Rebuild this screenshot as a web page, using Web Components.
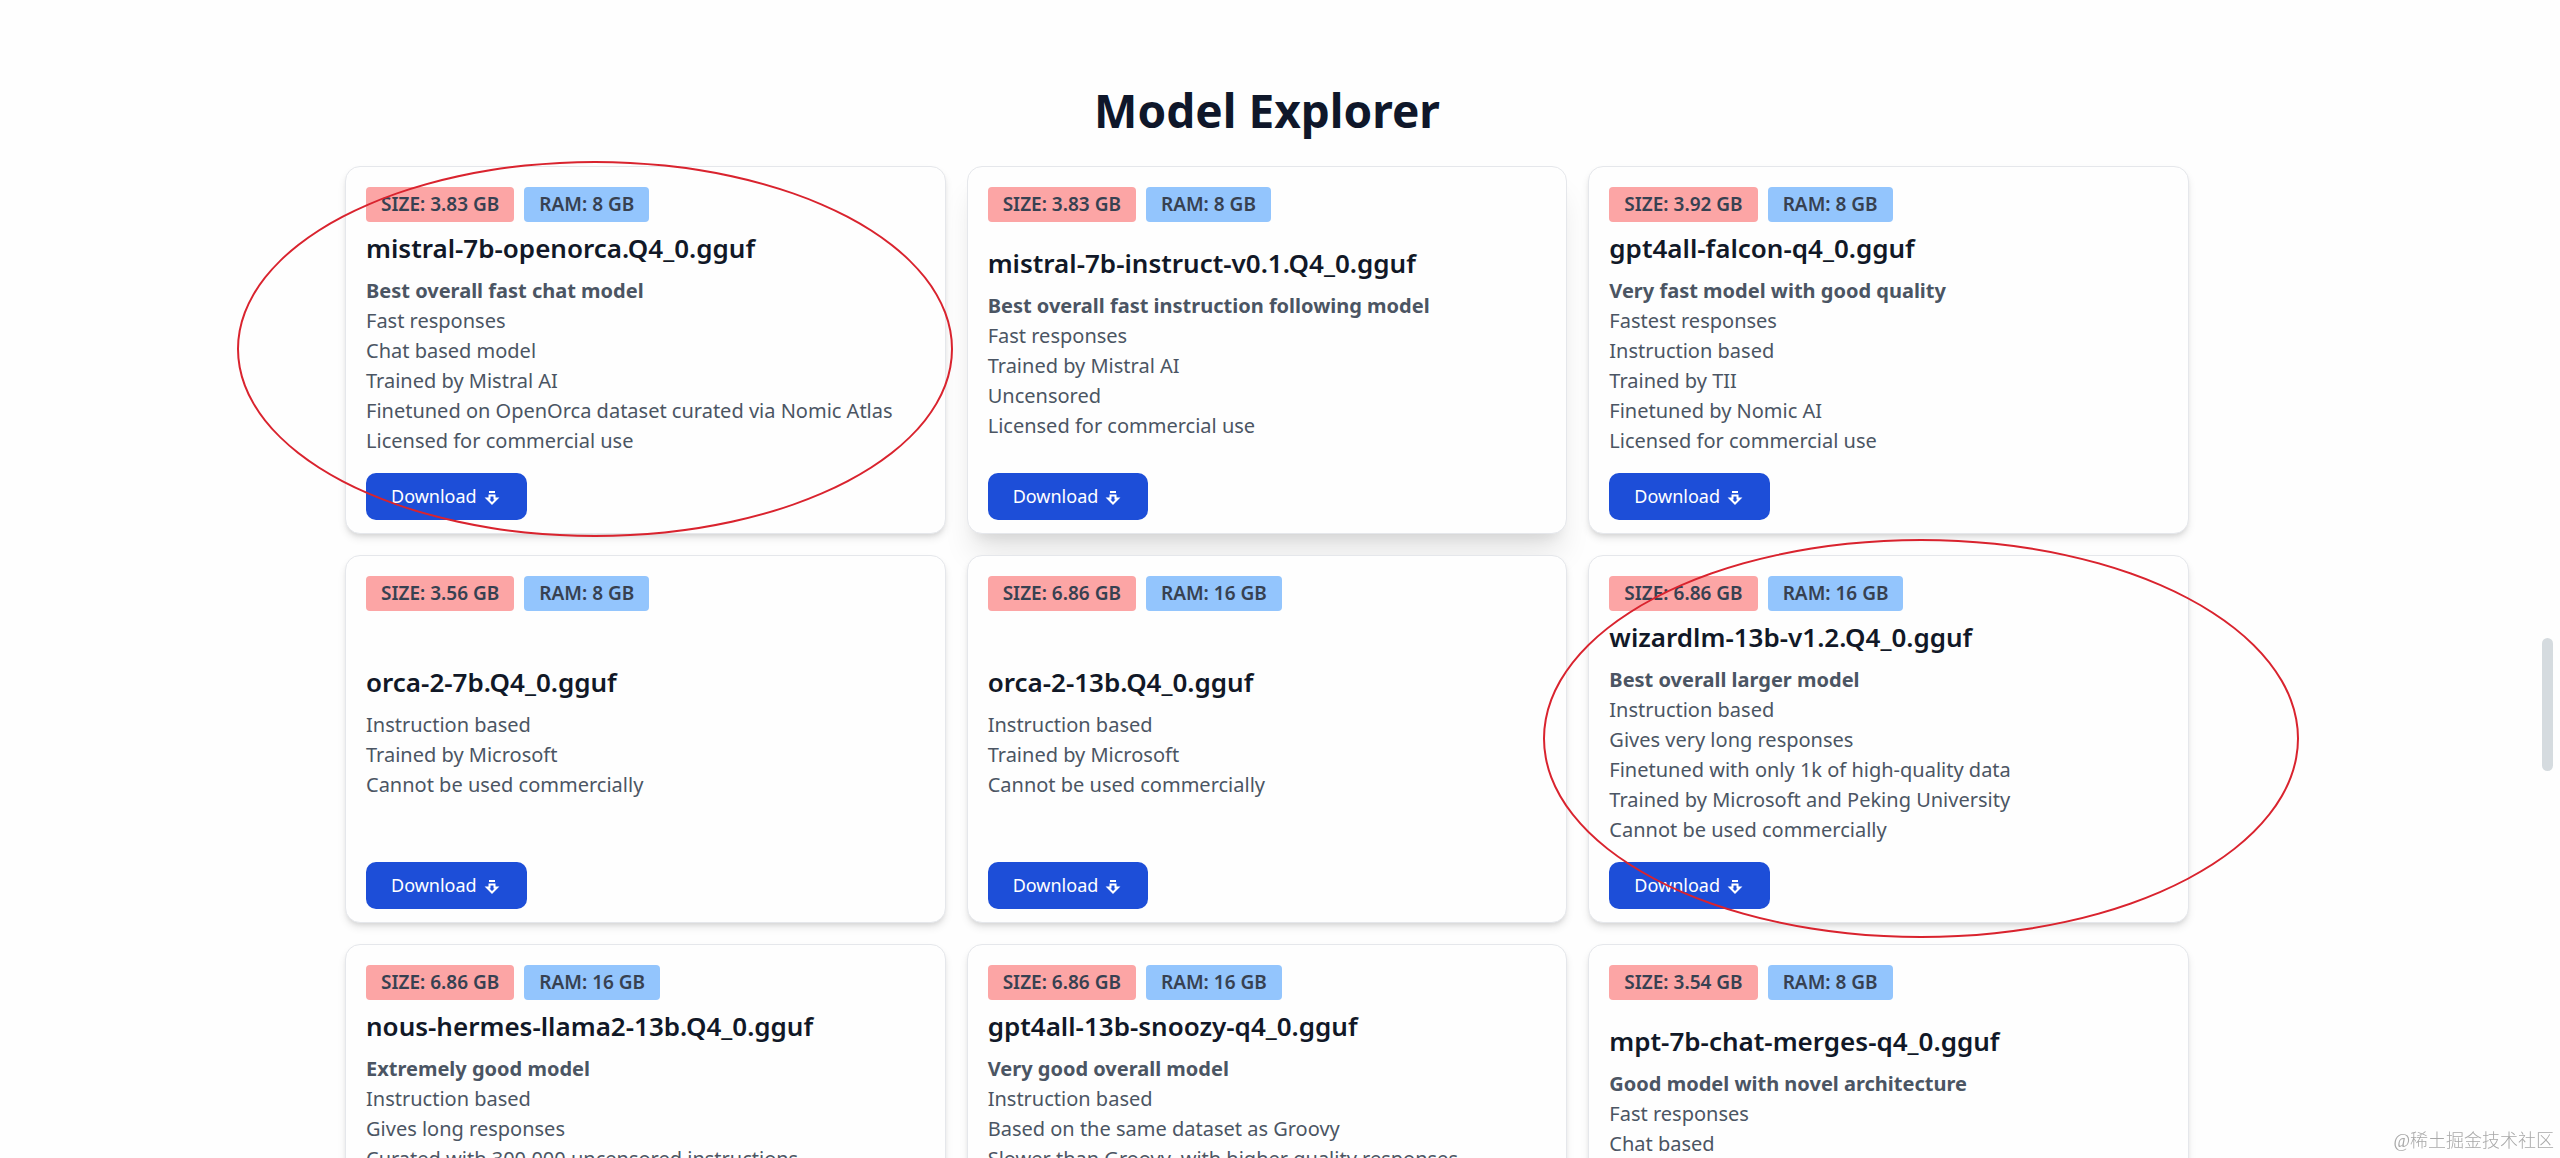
<!DOCTYPE html>
<html lang="en">
<head>
<meta charset="utf-8">
<title>Model Explorer</title>
<style>
  html, body {
    height: 100%;
    margin: 0;
  }
  body {
    overflow: hidden;
    background: #fefefe;
    font-family: "Noto Sans", "Open Sans", sans-serif;
  }
</style>
</head>
<body>
<model-explorer></model-explorer>

<script>
const models = [
  { file: 'mistral-7b-openorca.Q4_0.gguf', size: '3.83', ram: 8, title: 'Best overall fast chat model', mark: 'first',
    notes: ['Fast responses', 'Chat based model', 'Trained by Mistral AI', 'Finetuned on OpenOrca dataset curated via Nomic Atlas', 'Licensed for commercial use'] },
  { file: 'mistral-7b-instruct-v0.1.Q4_0.gguf', size: '3.83', ram: 8, title: 'Best overall fast instruction following model', raised: true,
    notes: ['Fast responses', 'Trained by Mistral AI', 'Uncensored', 'Licensed for commercial use'] },
  { file: 'gpt4all-falcon-q4_0.gguf', size: '3.92', ram: 8, title: 'Very fast model with good quality',
    notes: ['Fastest responses', 'Instruction based', 'Trained by TII', 'Finetuned by Nomic AI', 'Licensed for commercial use'] },
  { file: 'orca-2-7b.Q4_0.gguf', size: '3.56', ram: 8,
    notes: ['Instruction based', 'Trained by Microsoft', 'Cannot be used commercially'] },
  { file: 'orca-2-13b.Q4_0.gguf', size: '6.86', ram: 16,
    notes: ['Instruction based', 'Trained by Microsoft', 'Cannot be used commercially'] },
  { file: 'wizardlm-13b-v1.2.Q4_0.gguf', size: '6.86', ram: 16, title: 'Best overall larger model', mark: 'second',
    notes: ['Instruction based', 'Gives very long responses', 'Finetuned with only 1k of high-quality data', 'Trained by Microsoft and Peking University', 'Cannot be used commercially'] },
  { file: 'nous-hermes-llama2-13b.Q4_0.gguf', size: '6.86', ram: 16, title: 'Extremely good model',
    notes: ['Instruction based', 'Gives long responses', 'Curated with 300,000 uncensored instructions', 'Trained by Nous Research', 'Cannot be used commercially'] },
  { file: 'gpt4all-13b-snoozy-q4_0.gguf', size: '6.86', ram: 16, title: 'Very good overall model',
    notes: ['Instruction based', 'Based on the same dataset as Groovy', 'Slower than Groovy, with higher quality responses', 'Trained by Nomic AI', 'Cannot be used commercially'] },
  { file: 'mpt-7b-chat-merges-q4_0.gguf', size: '3.54', ram: 8, title: 'Good model with novel architecture',
    notes: ['Fast responses', 'Chat based', 'Trained by Mosaic ML', 'Cannot be used commercially'] }
];

const make = (html) => {
  const template = document.createElement('template');
  template.innerHTML = html;
  return template;
};

const tagTemplate = make(`
<style>
  :host {
    display: block;
    padding: 5px 15px;
    border-radius: 4px;
    background: #93c5fd;
    color: #374151;
    font-size: 19px;
    font-weight: 600;
    line-height: 25px;
    white-space: nowrap;
  }
  :host([kind="size"]) {
    background: #fca5a5;
  }
</style>
<slot></slot>
`);

class ModelTag extends HTMLElement {
  constructor() {
    super();
    this.attachShadow({ mode: 'open' }).appendChild(tagTemplate.content.cloneNode(true));
  }
}
customElements.define('model-tag', ModelTag);

const buttonTemplate = make(`
<style>
  :host {
    display: flex;
  }
  button {
    display: flex;
    align-items: center;
    gap: 7px;
    padding: 11px 25px;
    border: 0;
    border-radius: 10px;
    background: #1d4ed8;
    color: #fff;
    font-family: inherit;
    font-size: 18px;
    line-height: 25px;
    cursor: pointer;
  }
  svg {
    display: block;
    width: 18px;
    height: 18px;
  }
</style>
<button type="button">
  <slot></slot>
  <svg viewBox="0 0 18 18" fill="none" stroke="currentColor" stroke-width="2" aria-hidden="true">
    <path d="M5 4h6M5.500 7.500h5v3h2.500l-5 5-5-5h2.500z"/>
  </svg>
</button>
`);

class DownloadButton extends HTMLElement {
  constructor() {
    super();
    this.attachShadow({ mode: 'open' }).appendChild(buttonTemplate.content.cloneNode(true));
  }
}
customElements.define('download-button', DownloadButton);

const cardTemplate = make(`
<style>
  :host {
    display: flex;
    flex-direction: column;
    position: relative;
    box-sizing: border-box;
    padding: 20px 20px 13px;
    border: 1px solid #e5e7eb;
    border-radius: 15px;
    background: #fefefe;
    box-shadow: 0 5px 8px -1px rgba(0, 0, 0, .1), 0 3px 5px -2px rgba(0, 0, 0, .1);
  }
  :host([raised]) {
    box-shadow: 0 25px 31px -6px rgba(0, 0, 0, .1), 0 10px 13px -8px rgba(0, 0, 0, .1);
  }
  .tags {
    display: flex;
    gap: 10px;
  }
  .info {
    flex: 1;
    display: flex;
    flex-direction: column;
    justify-content: center;
    padding: 10px 0 17px;
  }
  h2 {
    margin: 0 0 12px;
    color: #111827;
    font-size: 26px;
    font-weight: 600;
    line-height: 32px;
  }
  ul {
    margin: 0;
    padding: 0;
    list-style: none;
    color: #4b5563;
    font-size: 20px;
    line-height: 30px;
  }
  .lead {
    font-weight: 700;
  }
</style>
<div class="tags"></div>
<div class="info">
  <h2></h2>
  <ul></ul>
</div>
<download-button>Download</download-button>
<slot></slot>
`);

class ModelCard extends HTMLElement {
  constructor() {
    super();
    this.attachShadow({ mode: 'open' }).appendChild(cardTemplate.content.cloneNode(true));
  }

  set model(m) {
    const root = this.shadowRoot;
    root.querySelector('.tags').innerHTML = `
      <model-tag kind="size">SIZE: ${m.size} GB</model-tag>
      <model-tag kind="ram">RAM: ${m.ram} GB</model-tag>`;
    root.querySelector('h2').textContent = m.file;
    const lead = m.title ? `<li class="lead">${m.title}</li>` : '';
    root.querySelector('ul').innerHTML = lead + m.notes.map(n => `<li>${n}</li>`).join('');
    this.toggleAttribute('raised', !!m.raised);
  }
}
customElements.define('model-card', ModelCard);

// red ellipse drawn round a card
const markTemplate = make(`
<style>
  :host {
    display: block;
    position: absolute;
    z-index: 1;
    box-sizing: border-box;
    border: 2px solid #d9232e;
    border-radius: 50%;
    pointer-events: none;
  }
  :host([place="first"]) {
    inset: -6px -8px -4px -109px;
  }
  :host([place="second"]) {
    inset: -17px -111px -16px -46px;
  }
</style>
`);

class RingMark extends HTMLElement {
  constructor() {
    super();
    this.attachShadow({ mode: 'open' }).appendChild(markTemplate.content.cloneNode(true));
  }
}
customElements.define('ring-mark', RingMark);

const pageTemplate = make(`
<style>
  :host {
    display: block;
    padding: 80px 26px 0 0;
  }
  h1 {
    margin: 0 0 26px;
    color: #0f172a;
    font-size: 46px;
    font-weight: 700;
    line-height: 60px;
    text-align: center;
  }
  .grid {
    display: grid;
    grid-template-columns: repeat(3, minmax(0, 1fr));
    gap: 21px;
    max-width: 1844px;
    margin: 0 auto;
  }
  .thumb {
    position: fixed;
    top: 638px;
    right: 7px;
    width: 11px;
    height: 133px;
    border-radius: 6px;
    background: #d5dbdf;
  }
  .watermark {
    position: fixed;
    right: 6px;
    bottom: 4px;
    color: #a8a8a8;
    font-family: "Liberation Serif", "Noto Sans CJK SC", serif;
    font-size: 18px;
    font-weight: 300;
    line-height: 26px;
  }
</style>
<h1>Model Explorer</h1>
<div class="grid"></div>
<div class="thumb"></div>
<div class="watermark" lang="zh">@稀土掘金技术社区</div>
`);

class ModelExplorer extends HTMLElement {
  constructor() {
    super();
    const shadow = this.attachShadow({ mode: 'open' });
    const content = pageTemplate.content.cloneNode(true);
    const grid = content.querySelector('.grid');

    for (const m of models) {
      const card = document.createElement('model-card');
      card.model = m;
      if (m.mark) {
        const ring = document.createElement('ring-mark');
        ring.setAttribute('place', m.mark);
        card.appendChild(ring);
      }
      grid.appendChild(card);
    }
    shadow.appendChild(content);
    customElements.upgrade(shadow);
  }
}
customElements.define('model-explorer', ModelExplorer);
</script>
</body>
</html>
